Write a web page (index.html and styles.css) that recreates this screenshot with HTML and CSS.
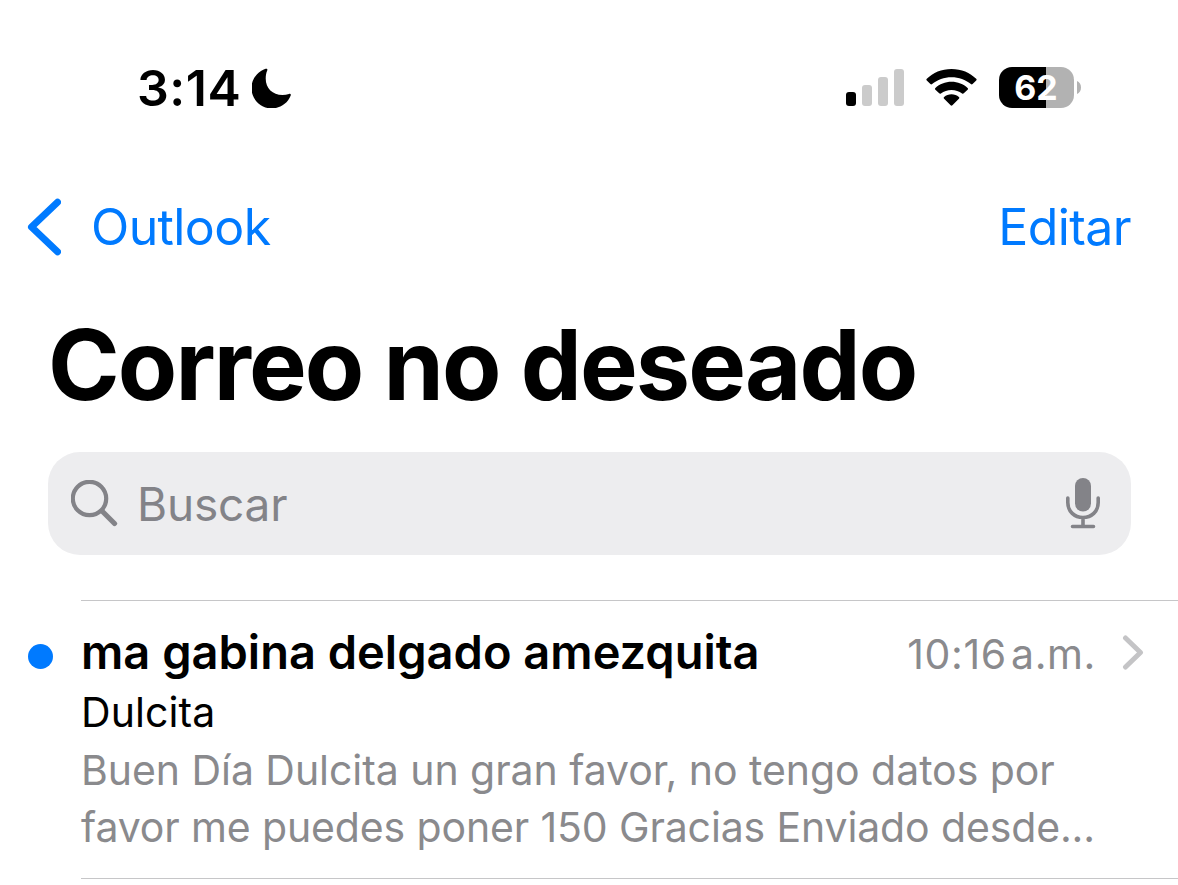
FILE: index.html
```html
<!DOCTYPE html>
<html lang="es">
<head>
    <meta charset="UTF-8">
    <meta name="viewport" content="width=device-width, initial-scale=1.0">
    <title>Correo no deseado</title>
    <link rel="stylesheet" href="styles.css">
</head>
<body>
<header class="status-bar">
    <div class="clock">
        <span class="clock-time">3:14</span>
        <svg class="moon" width="40" height="40" viewBox="0 0 40 40">
            <path d="M15.2 2.500C15.800 1.100 14.900.3 13.600.8A20.300 20.300 0 1 0 38.600 27.700C39.200 26.300 38.500 25.500 37 26C34.900 26.700 32.800 27 30.500 27C20.500 27 13.700 20.300 13.700 10.500C13.700 7.500 14.200 4.800 15.200 2.500Z"/>
        </svg>
    </div>
    <div class="indicators">
        <svg class="signal" width="58" height="37" viewBox="0 0 58 37">
            <rect x="0" y="23" width="10" height="14" rx="3"/>
            <g fill="#cbcbcb">
                <rect x="16" y="16" width="10" height="21" rx="3"/>
                <rect x="32" y="8" width="10" height="29" rx="3"/>
                <rect x="48" y="0" width="10" height="37" rx="3"/>
            </g>
        </svg>
        <svg class="wifi" width="51" height="37" viewBox="0 0 51 37">
            <path d="M25.5 0C35.5 0 44 3.700 50.200 9.800C50.800 10.400 50.800 11 50.200 11.600L46.600 15.100C46 15.700 45.500 15.700 44.900 15.100C39.500 10.600 33 8.200 25.500 8.200S11.500 10.600 6.100 15.100C5.500 15.700 5 15.700 4.400 15.100L.8 11.600C.2 11 .2 10.400 .8 9.800C7 3.700 15.500 0 25.500 0Z"/>
            <path d="M25.500 12.700C31.800 12.700 37.400 15 41.600 18.900C42.200 19.500 42.200 20.100 41.600 20.700L37.800 24.300C37.200 24.900 36.700 24.900 36.100 24.400C33.100 22.100 29.500 20.900 25.500 20.900S17.900 22.100 14.900 24.400C14.300 24.900 13.800 24.900 13.200 24.300L9.400 20.700C8.800 20.100 8.800 19.500 9.400 18.900C13.600 15 19.200 12.700 25.500 12.700Z"/>
            <path d="M25.500 25.300C28.300 25.300 30.900 26.300 32.900 28C33.500 28.500 33.500 29.100 32.900 29.700L26.400 36.200C25.800 36.800 25.200 36.800 24.600 36.200L18.100 29.700C17.500 29.100 17.500 28.500 18.100 28C20.100 26.300 22.700 25.300 25.500 25.300Z"/>
        </svg>
        <div class="battery">
            <div class="battery-body">62</div>
            <svg width="4" height="13" viewBox="0 0 4 13">
                <path d="M0 0C2.500 1 4 3.500 4 6.500S2.500 12 0 13Z" fill="#b2b2b2"/>
            </svg>
        </div>
    </div>
</header>

<nav class="nav-bar">
    <a class="back">
        <svg width="34" height="58" viewBox="0 0 34 58">
            <path d="M30.500 4.200L4.500 29L30.500 53.800" fill="none" stroke="#007aff" stroke-width="7" stroke-linecap="round" stroke-linejoin="round"/>
        </svg>
        <span class="back-label">Outlook</span>
    </a>
    <a class="edit">Editar</a>
</nav>

<h1 class="title">Correo no deseado</h1>

<div class="search">
    <svg width="47" height="47" viewBox="0 0 47 47" fill="none" stroke="#838388" stroke-linecap="round">
        <circle cx="18.500" cy="18.500" r="16.700" stroke-width="4.200"/>
        <path d="M31 31L43.500 43.500" stroke-width="5.200"/>
    </svg>
    <span class="search-text">Buscar</span>
    <svg class="mic" width="34" height="51" viewBox="0 0 34 51" fill="none" stroke="#838388" stroke-width="3.600" stroke-linecap="round">
        <rect x="9" y="0" width="16" height="33.500" rx="8" fill="#838388" stroke="none"/>
        <path d="M1.800 20V24.500C1.800 33.500 8.500 39.500 17 39.500S32.200 33.500 32.200 24.500V20M17 40V48.500M6.500 48.500H27.500"/>
    </svg>
</div>

<main class="messages">
    <article class="message">
        <span class="unread"></span>
        <div class="message-content">
            <div class="message-head">
                <h2 class="sender">ma gabina delgado amezquita</h2>
                <span class="hour">10:16&#8202;a.m.</span>
                <svg class="chevron" width="22" height="36" viewBox="0 0 22 36">
                    <path d="M3.500 4L18.500 18.500L3.500 33" fill="none" stroke="#c4c4c6" stroke-width="5" stroke-linecap="round" stroke-linejoin="round"/>
                </svg>
            </div>
            <p class="subject">Dulcita</p>
            <p class="preview">Buen Día Dulcita un gran favor, no tengo datos por<br><span class="preview-end">favor me puedes poner 150 Gracias Enviado desde...</span></p>
        </div>
    </article>
</main>
</body>
</html>
```
FILE: styles.css
```css
* {
    box-sizing: border-box;
}

body {
    margin: 0;
    height: 885px;
    overflow: hidden;
    background-color: #ffffff;
    color: #000000;
    font-family: Inter, "Liberation Sans", sans-serif;
}

h1, h2, p {
    margin: 0;
}

svg {
    display: block;
    flex-shrink: 0;
}

.status-bar {
    display: flex;
    justify-content: space-between;
    align-items: center;
    height: 175px;
    padding: 0 97px 0 137px;
}

.clock {
    display: flex;
    align-items: center;
}

.clock-time {
    width: 115px;
    font-size: 50px;
    font-weight: 600;
    line-height: 60px;
    letter-spacing: 0.5px;
}

.indicators {
    display: flex;
    align-items: center;
}

.wifi {
    margin: 0 22px;
}

.battery {
    display: flex;
    align-items: center;
    gap: 3px;
}

.battery-body {
    width: 75px;
    height: 41px;
    padding-right: 1px;
    border-radius: 13px;
    background: linear-gradient(to right, #000000 47px, #b2b2b2 47px);
    color: #ffffff;
    font-size: 34px;
    font-weight: 700;
    line-height: 42px;
    text-align: center;
}

.nav-bar {
    display: flex;
    justify-content: space-between;
    align-items: center;
    height: 103px;
    padding: 0 47px 0 27px;
    color: #007aff;
    font-size: 50px;
    letter-spacing: -0.6px;
}

.back {
    display: flex;
    align-items: center;
    gap: 30px;
}

.title {
    padding-left: 48px;
    font-size: 97px;
    font-weight: 700;
    line-height: 174px;
    letter-spacing: -1.9px;
    white-space: nowrap;
}

.search {
    display: flex;
    align-items: center;
    height: 103px;
    margin: 0 47px 45px 48px;
    padding: 0 31px 0 23px;
    border-radius: 32px;
    background-color: #ededef;
    color: #838388;
    font-size: 46px;
}

.search-text {
    flex: 1;
    padding-left: 19px;
    letter-spacing: -0.2px;
}

.message {
    display: flex;
    padding-left: 28px;
}

.unread {
    width: 25px;
    height: 25px;
    margin: 44px 28px 0 0;
    border-radius: 50%;
    background-color: #007aff;
}

.message-content {
    flex: 1;
    height: 279px;
    padding-top: 19px;
    border-top: 1px solid #c6c6c8;
    border-bottom: 1px solid #c6c6c8;
    font-size: 41px;
    line-height: 57.5px;
    white-space: nowrap;
}

.message-head {
    display: flex;
    align-items: center;
    height: 64px;
    padding-right: 34px;
}

.sender {
    flex: 1;
    font-size: 47px;
    font-weight: 600;
}

.hour {
    padding-top: 6px;
    color: #8a8a8d;
    letter-spacing: 0.6px;
}

.chevron {
    margin-left: 26px;
}

.subject {
    letter-spacing: 0.1px;
}

.preview {
    color: #8a8a8d;
    letter-spacing: -0.05px;
}

.preview-end {
    letter-spacing: -0.13px;
}
```
